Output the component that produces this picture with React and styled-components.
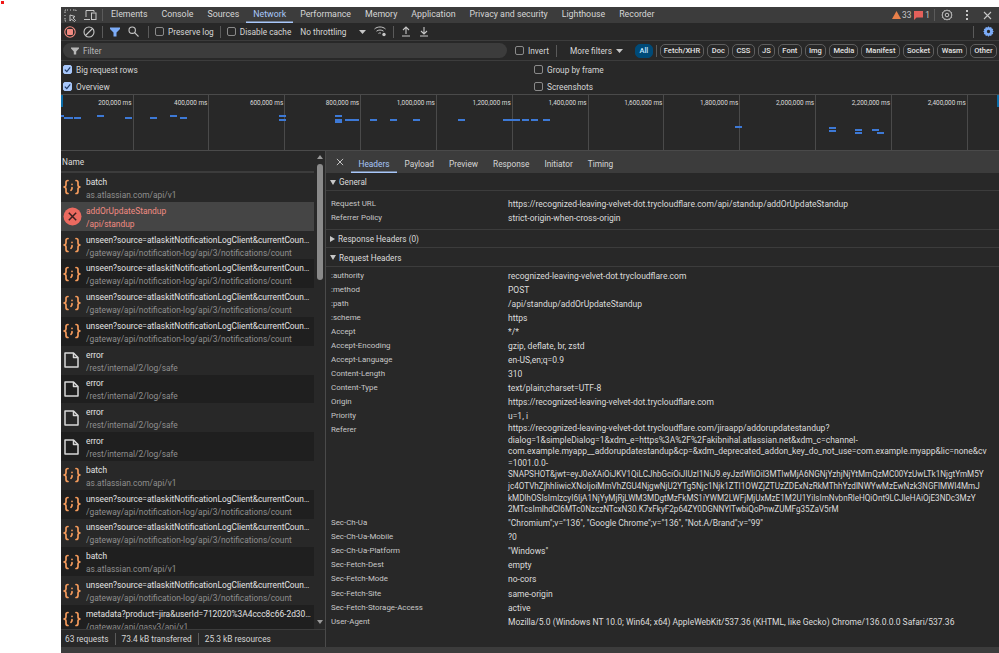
import styled, { createGlobalStyle } from "styled-components"

const GlobalStyle = createGlobalStyle`
  html, body {
    margin: 0;
    padding: 0;
    background: #fff;
  }
  * { box-sizing: border-box; }
`

const Page = styled.div`
  position: relative;
  width: 999px;
  height: 653px;
  padding: 7px 0 0 61px;
  overflow: hidden;
  background: #fff;
  font-family: Roboto, "Liberation Sans", sans-serif;
  font-size: 8.3px;
  color: #e3e3e3;
`

const RedDot = styled.div`
  position: absolute;
  left: 1px;
  top: 1px;
  width: 3px;
  height: 3px;
  background: #f01818;
`

const Devtools = styled.div`
  height: 646px;
  display: flex;
  flex-direction: column;
  background: #282828;
`

const MainTabs = styled.div`
  height: 16px;
  flex: none;
  display: flex;
  align-items: center;
  background: #3c3c3c;
`

const IconButton = styled.span`
  display: inline-flex;
  align-items: center;
  justify-content: center;
  flex: none;
  align-self: center;
  width: ${(p) => p.$w || 20}px;
  margin-left: ${(p) => p.$ml || 0}px;
  margin-right: ${(p) => p.$mr || 0}px;
`

const Divider = styled.span`
  flex: none;
  width: 1px;
  height: ${(p) => p.$h || 12}px;
  background: ${(p) => p.$c || "#5a5a5a"};
  margin: 0 ${(p) => p.$m ?? 6}px;
`

const MainTab = styled.span`
  height: 16px;
  line-height: 15px;
  padding: 0 7px;
  flex: none;
  font-size: 8.8px;
  color: ${(p) => (p.$active ? "#a8c7fa" : "#d6d6d6")};
  box-shadow: ${(p) => (p.$active ? "inset 0 -1.5px 0 #a8c7fa" : "none")};
`

const Badges = styled.div`
  margin-left: auto;
  display: flex;
  align-items: center;
  height: 16px;
  padding-right: 3px;
`

const Badge = styled.span`
  display: inline-flex;
  align-items: center;
  gap: ${(p) => p.$gap || 1}px;
  margin-right: ${(p) => p.$mr || 5}px;
  color: #c7c7c7;
`

const Toolbar = styled.div`
  height: 18px;
  flex: none;
  display: flex;
  align-items: center;
  border-bottom: 1px solid #3c3c3c;
`

const Box = styled.span`
  flex: none;
  width: 9px;
  height: 9px;
  border-radius: 2px;
  border: 1px solid #8a8a8a;
  margin-right: 4px;
  display: inline-flex;
  align-items: center;
  justify-content: center;
  background: ${(p) => (p.$checked ? "#a8c7fa" : "transparent")};
  border-color: ${(p) => (p.$checked ? "#a8c7fa" : "#8a8a8a")};
`

const Check = styled.label`
  display: inline-flex;
  align-items: center;
  flex: none;
  line-height: 14px;
  color: #d6d6d6;
`

const Plain = styled.span`
  flex: none;
  color: #d6d6d6;
  margin-left: ${(p) => p.$ml || 0}px;
`

const RightGroup = styled.div`
  margin-left: auto;
  display: flex;
  align-items: center;
`

const FilterRow = styled.div`
  height: 20px;
  flex: none;
  display: flex;
  align-items: center;
  padding-left: 2px;
  border-bottom: 1px solid #3c3c3c;
`

const FilterInput = styled.div`
  width: 444px;
  height: 15px;
  flex: none;
  display: flex;
  align-items: center;
  gap: 4px;
  padding-left: 8px;
  border-radius: 8px;
  background: #3c3c3c;
  color: #b8b8b8;
  margin-right: 8px;
`

const Chips = styled.div`
  display: flex;
  align-items: center;
  gap: 3px;
  margin-left: auto;
  padding-right: 2px;
`

const Chip = styled.span`
  flex: none;
  height: 14px;
  line-height: 12px;
  padding: 0 3.3px;
  border-radius: 5px;
  font-size: 7.5px;
  font-weight: 500;
  border: 1px solid ${(p) => (p.$on ? "#004a77" : "#5f5f5f")};
  background: ${(p) => (p.$on ? "#004a77" : "transparent")};
  color: ${(p) => (p.$on ? "#c2e7ff" : "#e3e3e3")};
`

const Options = styled.div`
  height: 34px;
  flex: none;
  display: grid;
  grid-template-columns: 471px 1fr;
  grid-template-rows: 17px 17px;
  align-items: center;
  padding-left: 2px;
  border-bottom: 1px solid #4a4a4a;
`

const Overview = styled.div`
  position: relative;
  height: 56px;
  flex: none;
  display: flex;
  border-bottom: 1px solid #4a4a4a;
`

const TimeCell = styled.div`
  width: 75.85px;
  flex: none;
  border-right: 1px solid #4a4a4a;
  text-align: right;
  font-size: 6.4px;
  line-height: 14px;
  padding: 1px 1px 0 0;
  color: #dcdcdc;
  white-space: nowrap;
  &:first-child {
    width: 72.5px;
  }
`

const Handle = styled.span`
  position: absolute;
  top: 0;
  width: 2px;
  height: 12px;
  background: #0a6ca8;
  left: ${(p) => (p.$right ? "936px" : "0")};
`

const Bars = styled.svg`
  position: absolute;
  left: 0;
  top: 0;
  width: 938px;
  height: 55px;
`

const Split = styled.div`
  flex: 1;
  min-height: 0;
  display: flex;
`

const NamePane = styled.div`
  width: 265px;
  flex: none;
  display: flex;
  flex-direction: column;
  border-right: 1px solid #4a4a4a;
`

const ListArea = styled.div`
  flex: 1;
  min-height: 0;
  display: flex;
`

const ListColumn = styled.div`
  width: 253px;
  flex: none;
  display: flex;
  flex-direction: column;
  overflow: hidden;
`

const NameHeader = styled.div`
  height: 22px;
  flex: none;
  line-height: 23px;
  padding-left: 1px;
  color: #dcdcdc;
  border-bottom: 2px solid #3c3c3c;
`

const Rows = styled.div`
  flex: 1;
  min-height: 0;
  overflow: hidden;
`

const RowItem = styled.div`
  height: 28.8px;
  display: flex;
  align-items: center;
  background: ${(p) => (p.$selected ? "#454545" : p.$dark ? "#1f1f1f" : "#282828")};
`

const RowIcon = styled.span`
  width: 25px;
  flex: none;
  display: flex;
  padding-left: 2px;
`

const RowText = styled.div`
  min-width: 0;
  flex: 1;
  font-size: 8.4px;
  line-height: 13px;
  padding: 3px 3px 0 0;
`

const RowName = styled.div`
  white-space: nowrap;
  overflow: hidden;
  text-overflow: ellipsis;
  color: ${(p) => (p.$error ? "#f28b82" : "#e3e3e3")};
`

const RowSub = styled.div`
  white-space: nowrap;
  overflow: hidden;
  text-overflow: ellipsis;
  color: ${(p) => (p.$error ? "#f28b82" : "#8f8f8f")};
`

const Scrollbar = styled.div`
  width: 11px;
  flex: none;
  display: flex;
  flex-direction: column;
  align-items: center;
`

const Arrow = styled.span`
  flex: none;
  width: 0;
  height: 0;
  border-left: 3px solid transparent;
  border-right: 3px solid transparent;
  border-${(p) => (p.$down ? "top" : "bottom")}: 4px solid #9a9a9a;
  margin-top: ${(p) => p.$mt}px;
`

const Thumb = styled.span`
  flex: none;
  width: 6px;
  height: 116px;
  margin-top: 5px;
  border-radius: 3px;
  background: #8a8a8a;
`

const Footer = styled.div`
  height: 18px;
  flex: none;
  display: flex;
  align-items: center;
  padding-left: 4px;
  white-space: nowrap;
  border-top: 1px solid #3c3c3c;
  color: #d6d6d6;
`

const DetailPane = styled.div`
  flex: 1;
  min-width: 0;
  display: flex;
  flex-direction: column;
`

const DetailTabs = styled.div`
  height: 22px;
  flex: none;
  display: flex;
  align-items: flex-end;
  background: #3c3c3c;
  padding-left: 5px;
`

const DetailTab = styled.span`
  height: 19px;
  line-height: 20px;
  padding: 0 7.5px;
  flex: none;
  color: ${(p) => (p.$active ? "#a8c7fa" : "#d6d6d6")};
  box-shadow: ${(p) => (p.$active ? "inset 0 -1.5px 0 #a8c7fa" : "none")};
`

const SectionTitle = styled.div`
  height: ${(p) => p.$h || 18}px;
  display: flex;
  align-items: center;
  gap: 3px;
  padding: 1px 0 0 4px;
  font-size: 8.2px;
  color: #dcdcdc;
  border-bottom: 1px solid #3c3c3c;
`

const Caret = styled.span`
  flex: none;
  width: 0;
  height: 0;
  ${(p) =>
    p.$open
      ? `border-left: 3px solid transparent; border-right: 3px solid transparent; border-top: 5px solid #c7c7c7;`
      : `border-top: 3px solid transparent; border-bottom: 3px solid transparent; border-left: 5px solid #c7c7c7;`}
`

const SectionBody = styled.div`
  padding: ${(p) => p.$pad || "6px 0 4px"};
  border-bottom: ${(p) => (p.$last ? "none" : "1px solid #3c3c3c")};
`

const HeaderRow = styled.div`
  display: grid;
  grid-template-columns: 177px 1fr;
  padding-left: 5px;
  line-height: ${(p) => p.$lh || 14}px;
`

const HeaderKey = styled.span`
  color: #c7c7c7;
  font-size: 7.9px;
  white-space: nowrap;
`

const HeaderValue = styled.span`
  color: #dcdcdc;
  font-size: 8.5px;
  line-height: inherit;
  white-space: nowrap;
`

const ValueLine = styled.div`
  line-height: 11.6px;
  white-space: nowrap;
  font-size: ${(p) => (p.$token ? "8.15px" : "8.5px")};
`

const BottomBand = styled.div`
  height: 6px;
  flex: none;
  background: #3c3c3c;
`

const Script = () => (
  <svg width="18" height="18" viewBox="0 0 18 18" fill="none" stroke="#f29a5c" strokeWidth="1.7" strokeLinecap="round" strokeLinejoin="round">
    <path d="M5 2.5C3.4 2.5 3 3.2 3 4.5V7C3 8.2 2.4 8.8 1 9C2.4 9.2 3 9.8 3 11V13.5C3 14.8 3.4 15.5 5 15.5" />
    <path d="M13 2.5C14.6 2.5 15 3.2 15 4.5V7C15 8.2 15.6 8.8 17 9C15.6 9.2 15 9.8 15 11V13.5C15 14.8 14.6 15.5 13 15.5" />
    <path d="M9 6.3V6.5M9 9.6V10.8L8 12.4" />
  </svg>
)

const ErrorIcon = () => (
  <svg width="19" height="19" viewBox="0 0 19 19">
    <circle cx="9.5" cy="9.5" r="9" fill="#ec6a60" />
    <path d="M5.8 5.8L13.2 13.2M13.2 5.8L5.8 13.2" stroke="#3a2020" strokeWidth="1.5" />
  </svg>
)

const DocIcon = () => (
  <svg width="17" height="18" viewBox="0 0 17 18" fill="none" stroke="#d8d8d8" strokeWidth="1.5" strokeLinejoin="round">
    <path d="M2 2H10.5L15 6.5V16H2Z" />
    <path d="M10.5 2V6.5H15" />
  </svg>
)

const Inspect = () => (
  <svg width="13" height="13" viewBox="0 0 13 13" fill="none" stroke="#c7c7c7" strokeWidth="1">
    <path d="M1 4V1H4M6 1H7M9 1H12V3M1 6V7M1 9V12H3" strokeDasharray="1.5 1" />
    <path d="M6 6V12L7.5 10.2L10.5 12.5L11.5 11.5L9 8.8L11 7.5Z" fill="none" />
  </svg>
)

const DeviceIcon = () => (
  <svg width="14" height="12" viewBox="0 0 14 12" fill="none" stroke="#c7c7c7" strokeWidth="1">
    <path d="M1 10.5H7M3 8V1.5H11V3" />
    <rect x="8.5" y="4" width="4.5" height="6.5" />
  </svg>
)

const GearOutline = () => (
  <svg width="12" height="12" viewBox="0 0 12 12" fill="none" stroke="#c7c7c7" strokeWidth="1">
    <path d="M6 .8L7 1.9L8.6 1.5L9.1 3L10.6 3.5L10.2 5L11.2 6L10.2 7L10.6 8.5L9.1 9L8.6 10.5L7 10.1L6 11.2L5 10.1L3.4 10.5L2.9 9L1.4 8.5L1.8 7L.8 6L1.8 5L1.4 3.5L2.9 3L3.4 1.5L5 1.9Z" />
    <circle cx="6" cy="6" r="1.8" />
  </svg>
)

const Dots = () => (
  <svg width="4" height="12" viewBox="0 0 4 12" fill="#c7c7c7">
    <rect x="1" y="1" width="2" height="2" />
    <rect x="1" y="5" width="2" height="2" />
    <rect x="1" y="9" width="2" height="2" />
  </svg>
)

const Close = ({ size = 9, color = "#c7c7c7" }) => (
  <svg width={size} height={size} viewBox="0 0 9 9" stroke={color} strokeWidth="1.1">
    <path d="M1 1L8 8M8 1L1 8" />
  </svg>
)

const Warn = () => (
  <svg width="9" height="8" viewBox="0 0 9 8">
    <path d="M4.5 0L9 8H0Z" fill="#e8804a" />
  </svg>
)

const Flag = () => (
  <svg width="9" height="9" viewBox="0 0 9 9">
    <path d="M0 0H9V6.5H2.5L0 9Z" fill="#e4605a" />
  </svg>
)

const RecordIcon = () => (
  <svg width="12" height="12" viewBox="0 0 12 12" fill="none">
    <circle cx="6" cy="6" r="5.2" stroke="#f28b82" strokeWidth="1.1" />
    <rect x="3" y="3" width="6" height="6" rx="1" fill="#f28b82" />
  </svg>
)

const ClearIcon = () => (
  <svg width="12" height="12" viewBox="0 0 12 12" fill="none" stroke="#c7c7c7" strokeWidth="1.1">
    <circle cx="6" cy="6" r="5" />
    <path d="M2.5 9.5L9.5 2.5" />
  </svg>
)

const Funnel = ({ size = 10, color = "#7cacf8" }) => (
  <svg width={size} height={size} viewBox="0 0 10 10" fill={color}>
    <path d="M0 .5H10V2L6.5 5.5V9.5H3.5V5.5L0 2Z" />
  </svg>
)

const Search = () => (
  <svg width="11" height="11" viewBox="0 0 11 11" fill="none" stroke="#c7c7c7" strokeWidth="1.1">
    <circle cx="4.2" cy="4.2" r="3.2" />
    <path d="M6.6 6.6L10.5 10.5" />
  </svg>
)

const Wifi = () => (
  <svg width="13" height="11" viewBox="0 0 13 11" fill="none" stroke="#c7c7c7" strokeWidth="1">
    <path d="M.5 3C3.5 .3 8.5 .3 11.5 3M2.5 5.2C4.5 3.6 7.5 3.6 9.5 5.2M4.5 7.4C5.4 6.8 6.2 6.8 7 7.2" />
    <circle cx="10" cy="8.5" r="1.7" fill="#c7c7c7" stroke="none" />
  </svg>
)

const Upload = () => (
  <svg width="10" height="11" viewBox="0 0 10 11" fill="none" stroke="#c7c7c7" strokeWidth="1.1">
    <path d="M5 8V1M2 4L5 1L8 4M1 10H9" />
  </svg>
)

const Download = () => (
  <svg width="10" height="11" viewBox="0 0 10 11" fill="none" stroke="#c7c7c7" strokeWidth="1.1">
    <path d="M5 1V8M2 5L5 8L8 5M1 10H9" />
  </svg>
)

const BlueGear = () => (
  <svg width="11" height="11" viewBox="0 0 12 12" fill="#7cacf8">
    <path fillRule="evenodd" d="M6 .3L7.2 1.6L8.9 1.2L9.5 2.8L11.1 3.4L10.6 5L11.8 6L10.6 7L11.1 8.6L9.5 9.2L8.9 10.8L7.2 10.4L6 11.7L4.8 10.4L3.1 10.8L2.5 9.2L.9 8.6L1.4 7L.2 6L1.4 5L.9 3.4L2.5 2.8L3.1 1.2L4.8 1.6ZM6 4.2A1.8 1.8 0 1 0 6 7.8A1.8 1.8 0 1 0 6 4.2Z" />
  </svg>
)

const CheckMark = () => (
  <svg width="7" height="7" viewBox="0 0 7 7" fill="none" stroke="#1f3a66" strokeWidth="1.2">
    <path d="M.8 3.6L2.8 5.6L6.2 1.4" />
  </svg>
)

const SmallArrow = () => (
  <svg width="7" height="4" viewBox="0 0 7 4" fill="#c7c7c7">
    <path d="M0 0H7L3.5 4Z" />
  </svg>
)

const mainTabs = ["Elements", "Console", "Sources", "Network", "Performance", "Memory", "Application", "Privacy and security", "Lighthouse", "Recorder"]

const chips = ["Fetch/XHR", "Doc", "CSS", "JS", "Font", "Img", "Media", "Manifest", "Socket", "Wasm", "Other"]

const times = ["200,000 ms", "400,000 ms", "600,000 ms", "800,000 ms", "1,000,000 ms", "1,200,000 ms", "1,400,000 ms", "1,600,000 ms", "1,800,000 ms", "2,000,000 ms", "2,200,000 ms", "2,400,000 ms"]

// x1, x2, y in overview coordinates
const marks = [
  [0, 3, 20], [3, 12, 22], [13, 20, 22], [36, 43, 20], [64, 71, 22], [89, 96, 22], [109, 116, 20], [119, 126, 22],
  [218, 225, 20], [218, 225, 24], [274, 281, 20], [274, 281, 24], [274, 281, 26], [284, 298, 24], [309, 316, 24], [329, 336, 24], [352, 359, 24],
  [397, 404, 24], [442, 449, 24], [449, 453, 24], [453, 459, 24], [461, 468, 24], [470, 477, 24], [482, 489, 24],
  [674, 681, 31], [768, 775, 32], [768, 775, 35], [794, 801, 34], [794, 801, 37], [811, 818, 34], [816, 823, 37],
]

const SCRIPT = "script"
const unseen = {
  icon: SCRIPT,
  name: "unseen?source=atlaskitNotificationLogClient&currentCount=0",
  sub: "/gateway/api/notification-log/api/3/notifications/count",
}
const batch = { icon: SCRIPT, name: "batch", sub: "as.atlassian.com/api/v1" }
const error = { icon: "doc", name: "error", sub: "/rest/internal/2/log/safe" }

const requests = [
  batch,
  { icon: "error", name: "addOrUpdateStandup", sub: "/api/standup", failed: true },
  unseen, unseen, unseen, unseen,
  error, error, error, error,
  batch, unseen, unseen, batch, unseen,
  { icon: SCRIPT, name: "metadata?product=jira&userId=712020%3A4ccc8c66-2d30-4c50", sub: "/gateway/api/gasv3/api/v1" },
]

const requestHeaders = [
  [":authority", "recognized-leaving-velvet-dot.trycloudflare.com"],
  [":method", "POST"],
  [":path", "/api/standup/addOrUpdateStandup"],
  [":scheme", "https"],
  ["Accept", "*/*"],
  ["Accept-Encoding", "gzip, deflate, br, zstd"],
  ["Accept-Language", "en-US,en;q=0.9"],
  ["Content-Length", "310"],
  ["Content-Type", "text/plain;charset=UTF-8"],
  ["Origin", "https://recognized-leaving-velvet-dot.trycloudflare.com"],
  ["Priority", "u=1, i"],
]

const refererLines = [
  "https://recognized-leaving-velvet-dot.trycloudflare.com/jiraapp/addorupdatestandup?",
  "dialog=1&simpleDialog=1&xdm_e=https%3A%2F%2Fakibnihal.atlassian.net&xdm_c=channel-",
  "com.example.myapp__addorupdatestandup&cp=&xdm_deprecated_addon_key_do_not_use=com.example.myapp&lic=none&cv",
  "=1001.0.0-",
  "SNAPSHOT&jwt=eyJ0eXAiOiJKV1QiLCJhbGciOiJIUzI1NiJ9.eyJzdWIiOiI3MTIwMjA6NGNjYzhjNjYtMmQzMC00YzUwLTk1NjgtYmM5Y",
  "jc4OTVhZjhhIiwicXNoIjoiMmVhZGU4NjgwNjU2YTg5Njc1Njk1ZTI1OWZjZTUzZDExNzRkMThhYzdlNWYwMzEwNzk3NGFlMWI4MmJ",
  "kMDlhOSIsImlzcyI6IjA1NjYyMjRjLWM3MDgtMzFkMS1iYWM2LWFjMjUxMzE1M2U1YiIsImNvbnRleHQiOnt9LCJleHAiOjE3NDc3MzY",
  "2MTcsImlhdCI6MTc0NzczNTcxN30.K7xFkyF2p64ZY0DGNNYlTwbiQoPnwZUMFg35ZaV5rM",
]

const moreHeaders = [
  ["Sec-Ch-Ua", "\"Chromium\";v=\"136\", \"Google Chrome\";v=\"136\", \"Not.A/Brand\";v=\"99\""],
  ["Sec-Ch-Ua-Mobile", "?0"],
  ["Sec-Ch-Ua-Platform", "\"Windows\""],
  ["Sec-Fetch-Dest", "empty"],
  ["Sec-Fetch-Mode", "no-cors"],
  ["Sec-Fetch-Site", "same-origin"],
  ["Sec-Fetch-Storage-Access", "active"],
  ["User-Agent", "Mozilla/5.0 (Windows NT 10.0; Win64; x64) AppleWebKit/537.36 (KHTML, like Gecko) Chrome/136.0.0.0 Safari/537.36"],
]

const icons = { script: <Script />, error: <ErrorIcon />, doc: <DocIcon /> }

const CheckBox = ({ checked, label }) => (
  <Check>
    <Box $checked={checked}>{checked && <CheckMark />}</Box>
    {label}
  </Check>
)

const App = () => {
  return (
    <Page>
      <GlobalStyle />
      <RedDot />
      <Devtools>
        <MainTabs>
          <IconButton $w={18}><Inspect /></IconButton>
          <IconButton $w={22}><DeviceIcon /></IconButton>
          <Divider $m={1} />
          {mainTabs.map((tab) => (
            <MainTab key={tab} $active={tab === "Network"}>{tab}</MainTab>
          ))}
          <Badges>
            <Badge $mr={3}><Warn />33</Badge>
            <Badge $mr={1} $gap={2}><Flag />1</Badge>
            <Divider $m={3} />
            <IconButton $w={18}><GearOutline /></IconButton>
            <IconButton $w={22}><Dots /></IconButton>
            <IconButton $w={18}><Close /></IconButton>
          </Badges>
        </MainTabs>

        <Toolbar>
          <IconButton $w={18}><RecordIcon /></IconButton>
          <IconButton $w={20}><ClearIcon /></IconButton>
          <Divider $m={3} />
          <IconButton $w={18}><Funnel size={10} /></IconButton>
          <IconButton $w={18}><Search /></IconButton>
          <Divider $m={6} />
          <CheckBox label="Preserve log" />
          <Divider $m={6} />
          <CheckBox label="Disable cache" />
          <Plain $ml={9}>No throttling</Plain>
          <IconButton $w={8} $ml={12}><SmallArrow /></IconButton>
          <IconButton $w={14} $ml={7}><Wifi /></IconButton>
          <Divider $m={5} />
          <IconButton $w={14}><Upload /></IconButton>
          <IconButton $w={22}><Download /></IconButton>
          <RightGroup>
            <Divider $m={5} />
            <IconButton $w={18}><BlueGear /></IconButton>
            <IconButton $w={2} />
          </RightGroup>
        </Toolbar>

        <FilterRow>
          <FilterInput><Funnel size={8} color="#b8b8b8" />Filter</FilterInput>
          <CheckBox label="Invert" />
          <Divider $m={7} />
          <Plain $ml={6}>More filters</Plain>
          <IconButton $w={8} $ml={4}><SmallArrow /></IconButton>
          <Chips>
            <Chip $on>All</Chip>
            <Divider $m={0} />
            {chips.map((chip) => <Chip key={chip}>{chip}</Chip>)}
          </Chips>
        </FilterRow>

        <Options>
          <CheckBox checked label="Big request rows" />
          <CheckBox label="Group by frame" />
          <CheckBox checked label="Overview" />
          <CheckBox label="Screenshots" />
        </Options>

        <Overview>
          {times.map((t) => <TimeCell key={t}>{t}</TimeCell>)}
          <Handle />
          <Handle $right />
          <Bars viewBox="0 0 938 55">
            {marks.map(([x1, x2, y], i) => (
              <rect key={i} x={x1} y={y} width={x2 - x1} height="2" fill="#3d79d6" />
            ))}
          </Bars>
        </Overview>

        <Split>
          <NamePane>
            <ListArea>
              <ListColumn>
                <NameHeader>Name</NameHeader>
                <Rows>
                  {requests.map((r, i) => (
                    <RowItem key={i} $selected={r.failed} $dark={i % 2 === 1}>
                      <RowIcon>{icons[r.icon]}</RowIcon>
                      <RowText>
                        <RowName $error={r.failed}>{r.name}</RowName>
                        <RowSub $error={r.failed}>{r.sub}</RowSub>
                      </RowText>
                    </RowItem>
                  ))}
                </Rows>
              </ListColumn>
              <Scrollbar>
                <Arrow $mt={4} />
                <Thumb />
                <Arrow $down $mt={340} />
              </Scrollbar>
            </ListArea>
            <Footer>
              63 requests
              <Divider $m={6} />
              73.4 kB transferred
              <Divider $m={6} />
              25.3 kB resources
            </Footer>
          </NamePane>

          <DetailPane>
            <DetailTabs>
              <IconButton $w={18} $mr={2}><Close size={8} /></IconButton>
              <DetailTab $active>Headers</DetailTab>
              <DetailTab>Payload</DetailTab>
              <DetailTab>Preview</DetailTab>
              <DetailTab>Response</DetailTab>
              <DetailTab>Initiator</DetailTab>
              <DetailTab>Timing</DetailTab>
            </DetailTabs>

            <SectionTitle><Caret $open />General</SectionTitle>
            <SectionBody>
              <HeaderRow>
                <HeaderKey>Request URL</HeaderKey>
                <HeaderValue>https://recognized-leaving-velvet-dot.trycloudflare.com/api/standup/addOrUpdateStandup</HeaderValue>
              </HeaderRow>
              <HeaderRow>
                <HeaderKey>Referrer Policy</HeaderKey>
                <HeaderValue>strict-origin-when-cross-origin</HeaderValue>
              </HeaderRow>
            </SectionBody>
            <SectionTitle><Caret />Response Headers (0)</SectionTitle>
            <SectionTitle $h={19}><Caret $open />Request Headers</SectionTitle>
            <SectionBody $last $pad="2px 0 0">
              {requestHeaders.map(([k, v]) => (
                <HeaderRow key={k}>
                  <HeaderKey>{k}</HeaderKey>
                  <HeaderValue>{v}</HeaderValue>
                </HeaderRow>
              ))}
              <HeaderRow>
                <HeaderKey>Referer</HeaderKey>
                <HeaderValue>
                  {refererLines.map((line, i) => <ValueLine key={line} $token={i >= 4}>{line}</ValueLine>)}
                </HeaderValue>
              </HeaderRow>
              {moreHeaders.map(([k, v]) => (
                <HeaderRow key={k} $lh={14.15}>
                  <HeaderKey>{k}</HeaderKey>
                  <HeaderValue>{v}</HeaderValue>
                </HeaderRow>
              ))}
            </SectionBody>
          </DetailPane>
        </Split>
        <BottomBand />
      </Devtools>
    </Page>
  )
}

export default App
